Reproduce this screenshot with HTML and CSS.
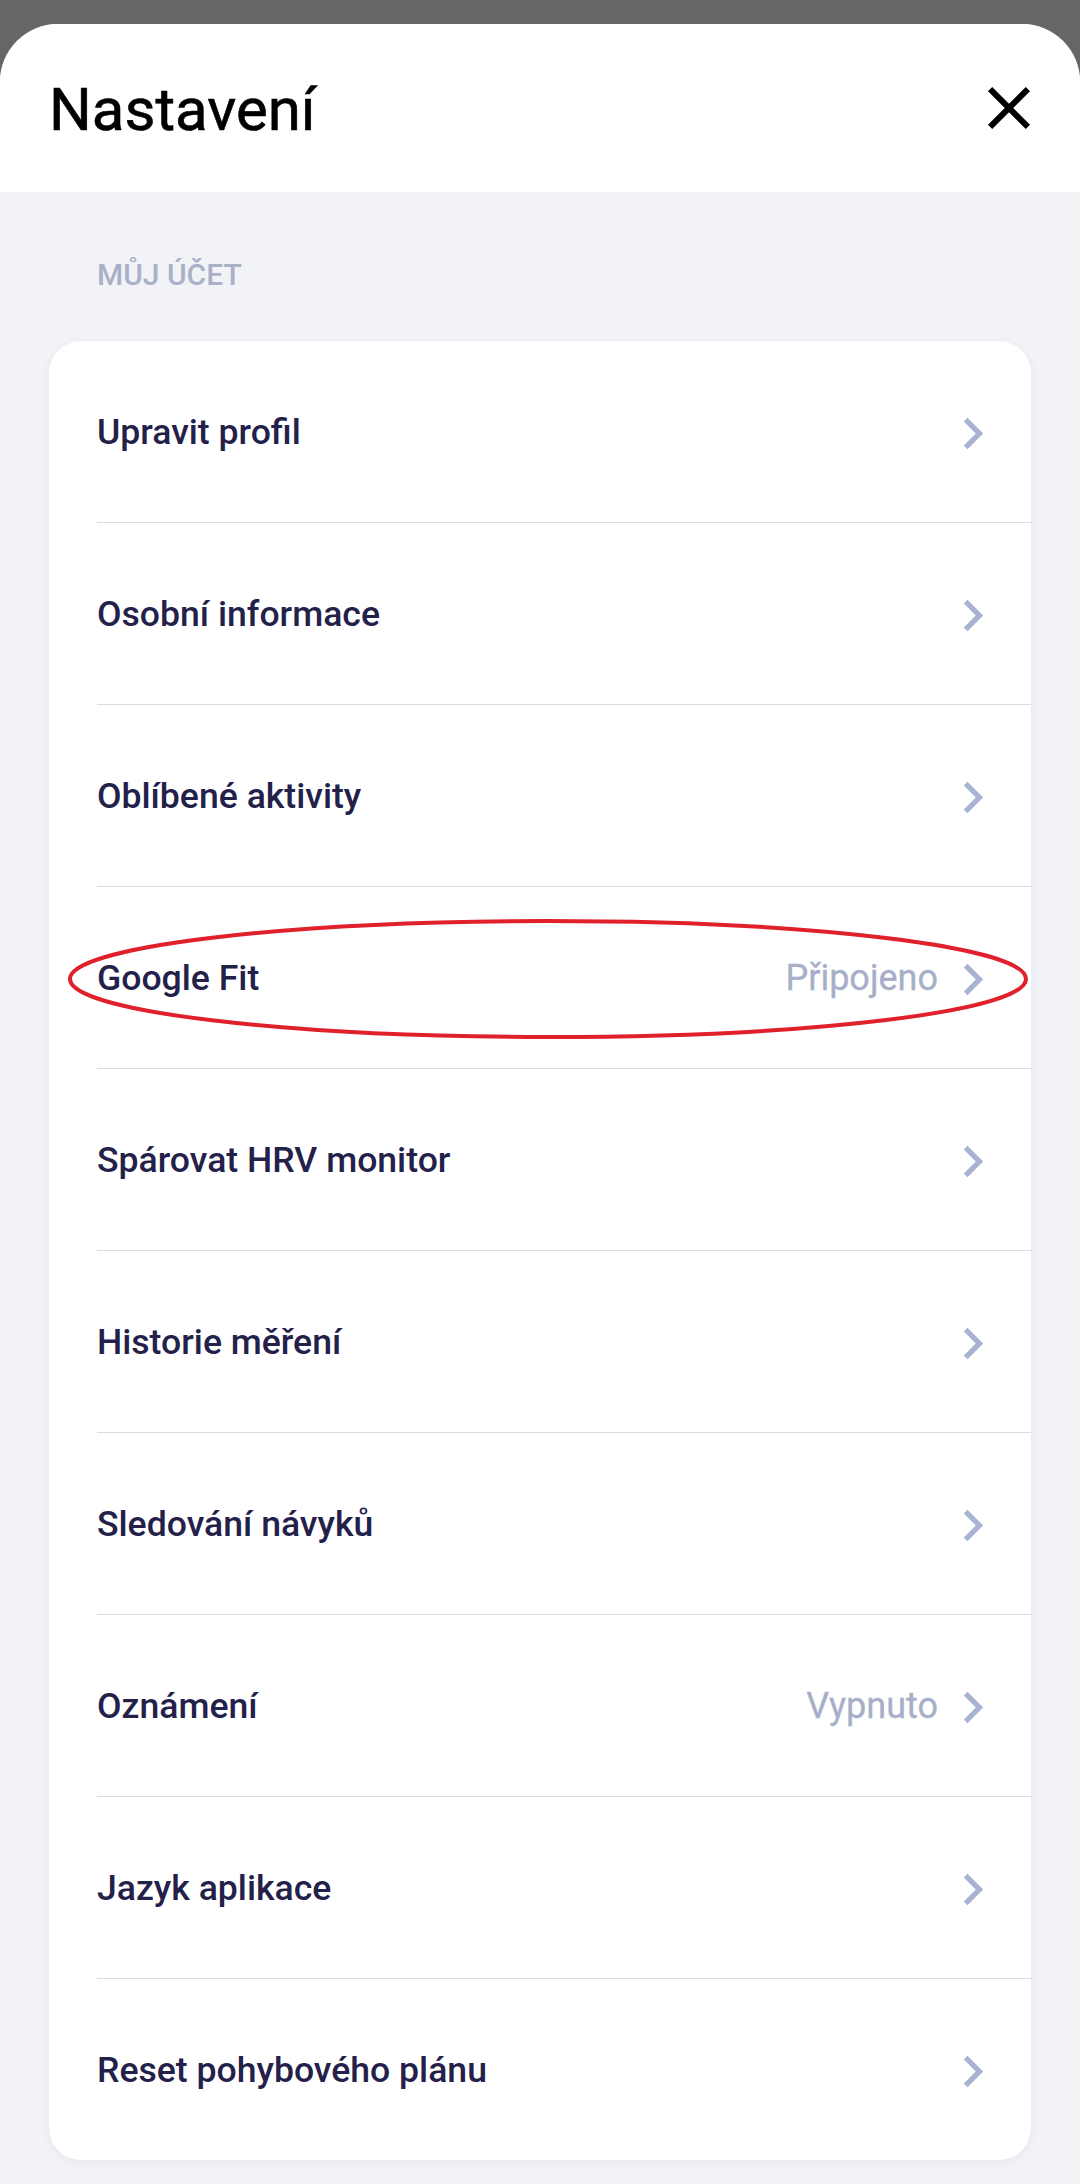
FILE: index.html
```html
<!DOCTYPE html>
<html lang="cs">
<head>
<meta charset="utf-8">
<title>Nastavení</title>
<link rel="stylesheet" href="styles.css">
</head>
<body>
<div class="screen">
  <div class="sheet">
    <header class="header">
      <h1 class="title">Nastavení</h1>
      <button class="close" aria-label="Zavřít">
        <svg viewBox="0 0 24 24" width="72" height="72"><path d="M19 6.41L17.59 5 12 10.59 6.41 5 5 6.41 10.59 12 5 17.59 6.41 19 12 13.41 17.59 19 19 17.59 13.41 12z" fill="#000"/></svg>
      </button>
    </header>
    <main class="content">
      <div class="section-label">MŮJ ÚČET</div>
      <div class="card">
        <div class="row"><span class="row-label">Upravit profil</span><span class="row-right"><svg class="chev" viewBox="8.3 5.8 8 12.4"><path d="M10 6L8.59 7.41 13.17 12l-4.58 4.59L10 18l6-6z"/></svg></span></div>
        <div class="row"><span class="row-label">Osobní informace</span><span class="row-right"><svg class="chev" viewBox="8.3 5.8 8 12.4"><path d="M10 6L8.59 7.41 13.17 12l-4.58 4.59L10 18l6-6z"/></svg></span></div>
        <div class="row"><span class="row-label">Oblíbené aktivity</span><span class="row-right"><svg class="chev" viewBox="8.3 5.8 8 12.4"><path d="M10 6L8.59 7.41 13.17 12l-4.58 4.59L10 18l6-6z"/></svg></span></div>
        <div class="row row-marked"><span class="row-label">Google Fit</span><span class="row-right"><span class="row-value">Připojeno</span><svg class="chev" viewBox="8.3 5.8 8 12.4"><path d="M10 6L8.59 7.41 13.17 12l-4.58 4.59L10 18l6-6z"/></svg></span>
          <svg class="mark" viewBox="0 0 964 126" width="964" height="126"><ellipse cx="482" cy="62" rx="478" ry="58" fill="none" stroke="#e0202a" stroke-width="4"/></svg>
        </div>
        <div class="row"><span class="row-label">Spárovat HRV monitor</span><span class="row-right"><svg class="chev" viewBox="8.3 5.8 8 12.4"><path d="M10 6L8.59 7.41 13.17 12l-4.58 4.59L10 18l6-6z"/></svg></span></div>
        <div class="row"><span class="row-label">Historie měření</span><span class="row-right"><svg class="chev" viewBox="8.3 5.8 8 12.4"><path d="M10 6L8.59 7.41 13.17 12l-4.58 4.59L10 18l6-6z"/></svg></span></div>
        <div class="row"><span class="row-label">Sledování návyků</span><span class="row-right"><svg class="chev" viewBox="8.3 5.8 8 12.4"><path d="M10 6L8.59 7.41 13.17 12l-4.58 4.59L10 18l6-6z"/></svg></span></div>
        <div class="row"><span class="row-label">Oznámení</span><span class="row-right"><span class="row-value">Vypnuto</span><svg class="chev" viewBox="8.3 5.8 8 12.4"><path d="M10 6L8.59 7.41 13.17 12l-4.58 4.59L10 18l6-6z"/></svg></span></div>
        <div class="row"><span class="row-label">Jazyk aplikace</span><span class="row-right"><svg class="chev" viewBox="8.3 5.8 8 12.4"><path d="M10 6L8.59 7.41 13.17 12l-4.58 4.59L10 18l6-6z"/></svg></span></div>
        <div class="row"><span class="row-label">Reset pohybového plánu</span><span class="row-right"><svg class="chev" viewBox="8.3 5.8 8 12.4"><path d="M10 6L8.59 7.41 13.17 12l-4.58 4.59L10 18l6-6z"/></svg></span></div>
      </div>
    </main>
  </div>
</div>
</body>
</html>
```
FILE: styles.css
```css
* { box-sizing: border-box; }
html, body { margin: 0; padding: 0; }
body {
  background: #666666;
  font-family: Roboto, "Noto Sans", "Liberation Sans", sans-serif;
  width: 1080px;
  height: 2184px;
  overflow: hidden;
}
.screen { padding-top: 24px; }
.sheet {
  background: #f2f3f7;
  border-radius: 58px 58px 0 0;
  overflow: hidden;
  height: 2160px;
}
.header {
  background: #ffffff;
  height: 168px;
  display: flex;
  align-items: center;
  justify-content: space-between;
  padding: 0 35px 0 49px;
}
.title {
  margin: 0;
  font-size: 60px;
  font-weight: 400;
  -webkit-text-stroke: 0.6px #000;
  color: #000;
  line-height: 70px;
  padding-top: 4px;
}
.close {
  border: 0;
  background: none;
  padding: 0;
  width: 72px;
  height: 72px;
  display: block;
}
.close svg { display: block; }
.content { padding: 0 49px; }
.section-label {
  margin-top: 65px;
  padding-left: 48px;
  font-size: 30px;
  line-height: 36px;
  font-weight: 500;
  color: #a9b1c8;
}
.card {
  margin-top: 48px;
  background: #fff;
  border-radius: 32px;
  box-shadow: 0 2px 10px rgba(30, 30, 60, 0.06);
}
.row {
  position: relative;
  margin-left: 48px;
  padding-right: 47px;
  height: 182px;
  border-bottom: 1px solid #dcdce1;
  display: flex;
  align-items: center;
  justify-content: space-between;
}
.row:last-child { border-bottom: 0; height: 181px; }
.row-label {
  font-size: 35.6px;
  font-weight: 500;
  color: #23214a;
}
.row-right { display: flex; align-items: center; }
.row-value {
  font-size: 36px;
  font-weight: 400;
  -webkit-text-stroke: 0.3px #a7afc8;
  color: #a7afc8;
  margin-right: 25px;
}
.chev {
  width: 21px;
  height: 35px;
  fill: #a8b2d2;
  display: block;
  margin-top: 4px;
}
.mark {
  position: absolute;
  left: -31px;
  top: 30px;
  pointer-events: none;
}
```
